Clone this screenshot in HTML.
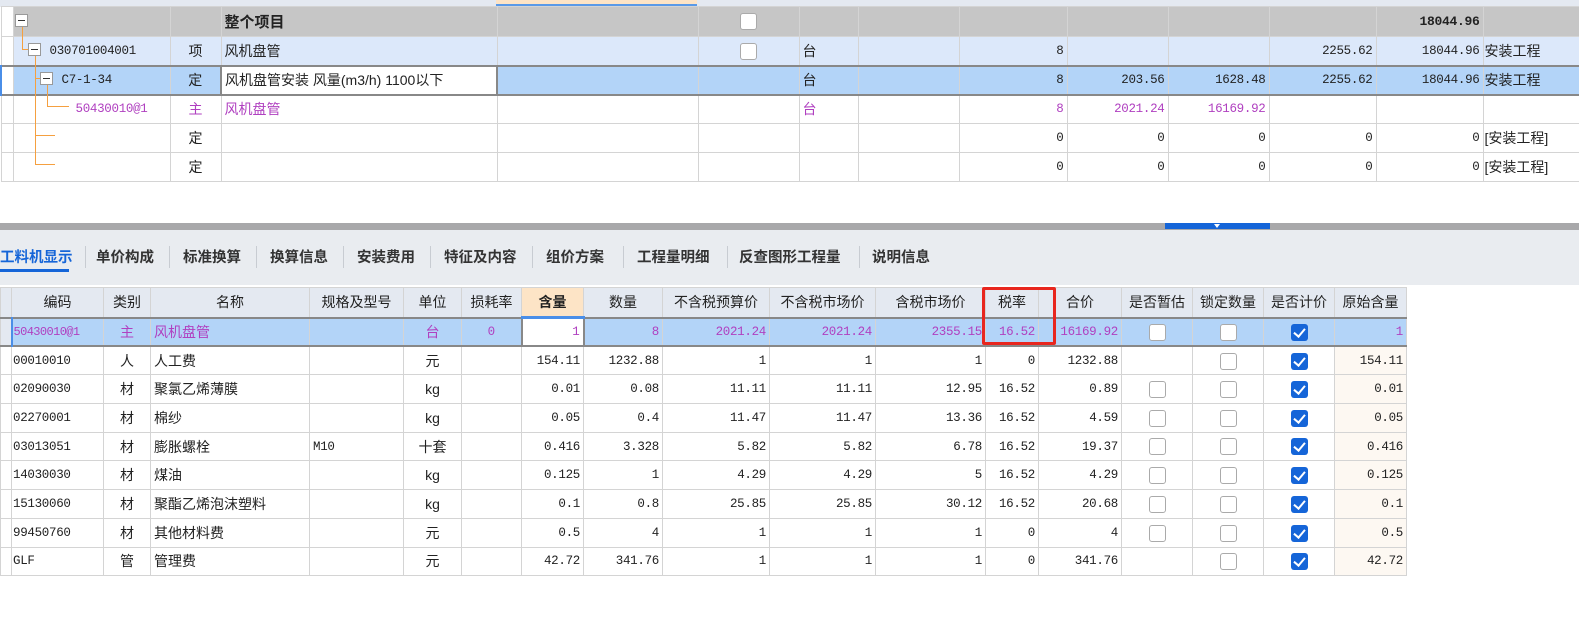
<!DOCTYPE html>
<html><head><meta charset="utf-8"><style>
*{margin:0;padding:0;box-sizing:border-box}
body{width:1579px;height:637px;background:#fff;position:relative;overflow:hidden;font-family:"Liberation Sans","Noto Sans CJK SC",sans-serif;font-size:14px;color:#222}
table{border-collapse:collapse;table-layout:fixed;position:absolute;left:0}
td{border:1px solid #d4d4d4;white-space:nowrap;overflow:hidden;padding:0 3px}
.n{text-align:right;font-family:"Liberation Mono","Noto Sans CJK SC",monospace;font-size:12.5px;letter-spacing:-0.3px}
.c{text-align:center}
.p{color:#b040c0}
.cb{display:inline-block;width:17px;height:17px;border:1.5px solid #aaa;border-radius:3px;background:#fff;vertical-align:middle}
.ck{display:inline-block;width:17px;height:17px;border-radius:3px;background:#1565d8;vertical-align:middle;position:relative}
.ck:after{content:"";position:absolute;left:5px;top:2px;width:5px;height:9px;border:solid #fff;border-width:0 2.5px 2.5px 0;transform:rotate(40deg)}
#top tr td{height:29px}
.tl{position:absolute;background:#f5a040}
.tb{position:absolute;width:13px;height:13px;border:1px solid #999;background:#fff}
.tb:after{content:"";position:absolute;left:2px;top:5px;width:7px;height:1px;background:#333}
.tab{position:absolute;top:246px;font-size:14.5px;font-weight:bold;color:#333}
.sep{position:absolute;top:246px;width:1px;height:22px;background:#c8ccd2}
#bot td{height:28.7px}
#bot .h td{background:#e4e9f1;text-align:center;font-size:14px;height:30px}
.cr{background:#fdf8f2}
</style></head><body>
<div style="position:absolute;left:0;top:0;width:1579px;height:7px;background:#e4e9f1"></div>
<div style="position:absolute;left:496px;top:4px;width:201px;height:3px;background:#5a9ae8"></div>
<div style="position:absolute;left:496px;top:0;width:201px;height:4px;background:#fde4c6"></div>
<table id="top" style="top:6px;width:1579px">
<colgroup><col style="width:12px"><col style="width:157px"><col style="width:51px"><col style="width:276px"><col style="width:201px"><col style="width:101px"><col style="width:59px"><col style="width:101px"><col style="width:108px"><col style="width:101px"><col style="width:101px"><col style="width:107px"><col style="width:107px"><col style="width:97px"></colgroup>
<tr style="background:#c6c6c6;height:30px"><td style="background:#fff"></td><td></td><td></td><td style="font-weight:bold;font-size:15px">整个项目</td><td></td><td class="c"><span class="cb"></span></td><td></td><td></td><td></td><td></td><td></td><td></td><td class="n" style="font-weight:bold;font-size:13px">18044.96</td><td></td></tr>
<tr style="background:#dce8fa"><td style="background:#fff"></td><td class="n" style="text-align:left;padding-left:36px">030701004001</td><td class="c">项</td><td>风机盘管</td><td></td><td class="c"><span class="cb"></span></td><td>台</td><td></td><td class="n">8</td><td></td><td></td><td class="n">2255.62</td><td class="n">18044.96</td><td style="padding:0 1px">安装工程</td></tr>
<tr style="background:#b3d4f8;border-top:2px solid #888;border-bottom:2px solid #888"><td style="background:#fff;border-left:2px solid #4a8ee8"></td><td class="n" style="text-align:left;padding-left:48px">C7-1-34</td><td class="c">定</td><td style="background:#fff;border:2px solid #888">风机盘管安装 风量(m3/h) 1100以下</td><td></td><td></td><td>台</td><td></td><td class="n">8</td><td class="n">203.56</td><td class="n">1628.48</td><td class="n">2255.62</td><td class="n">18044.96</td><td style="padding:0 1px">安装工程</td></tr>
<tr class="p"><td></td><td class="n p" style="text-align:left;padding-left:62px">50430010@1</td><td class="c">主</td><td>风机盘管</td><td></td><td></td><td>台</td><td></td><td class="n p">8</td><td class="n p">2021.24</td><td class="n p">16169.92</td><td></td><td></td><td></td></tr>
<tr><td></td><td></td><td class="c">定</td><td></td><td></td><td></td><td></td><td></td><td class="n">0</td><td class="n">0</td><td class="n">0</td><td class="n">0</td><td class="n">0</td><td style="padding:0 1px">[安装工程]</td></tr>
<tr><td></td><td></td><td class="c">定</td><td></td><td></td><td></td><td></td><td></td><td class="n">0</td><td class="n">0</td><td class="n">0</td><td class="n">0</td><td class="n">0</td><td style="padding:0 1px">[安装工程]</td></tr>
</table>
<div class="tl" style="left:22px;top:27px;width:1px;height:23px"></div>
<div class="tl" style="left:22px;top:49px;width:7px;height:1px"></div>
<div class="tl" style="left:35px;top:56px;width:1px;height:109px"></div>
<div class="tl" style="left:35px;top:78px;width:7px;height:1px"></div>
<div class="tl" style="left:35px;top:135px;width:20px;height:1px"></div>
<div class="tl" style="left:35px;top:164px;width:20px;height:1px"></div>
<div class="tl" style="left:47px;top:85px;width:1px;height:22px"></div>
<div class="tl" style="left:47px;top:106px;width:22px;height:1px"></div>
<div class="tb" style="left:15px;top:14px"></div>
<div class="tb" style="left:28px;top:43px"></div>
<div class="tb" style="left:40px;top:72px"></div>
<div style="position:absolute;left:0;top:223px;width:1579px;height:7px;background:#a8a8aa"></div>
<div style="position:absolute;left:1165px;top:223px;width:105px;height:6px;background:#1565d8"></div>
<div style="position:absolute;left:1214px;top:224px;width:0;height:0;border-left:3px solid transparent;border-right:3px solid transparent;border-top:4px solid #fff"></div>
<div style="position:absolute;left:0;top:230px;width:1579px;height:55px;background:#e9ecf0"></div>
<div class="tab" style="left:0;color:#1565d8">工料机显示</div>
<div style="position:absolute;left:0;top:269px;width:69px;height:3px;background:#1565d8"></div>
<div class="sep" style="left:85px"></div><div class="tab" style="left:96px">单价构成</div>
<div class="sep" style="left:169px"></div><div class="tab" style="left:183px">标准换算</div>
<div class="sep" style="left:256px"></div><div class="tab" style="left:270px">换算信息</div>
<div class="sep" style="left:343px"></div><div class="tab" style="left:357px">安装费用</div>
<div class="sep" style="left:430px"></div><div class="tab" style="left:444px">特征及内容</div>
<div class="sep" style="left:532px"></div><div class="tab" style="left:546px">组价方案</div>
<div class="sep" style="left:623px"></div><div class="tab" style="left:637px">工程量明细</div>
<div class="sep" style="left:727px"></div><div class="tab" style="left:739px">反查图形工程量</div>
<div class="sep" style="left:859px"></div><div class="tab" style="left:872px">说明信息</div>
<table id="bot" style="top:287px;width:1406px">
<colgroup><col style="width:11px"><col style="width:92px"><col style="width:47px"><col style="width:159px"><col style="width:94px"><col style="width:58px"><col style="width:60px"><col style="width:62px"><col style="width:79px"><col style="width:107px"><col style="width:106px"><col style="width:110px"><col style="width:53px"><col style="width:83px"><col style="width:71px"><col style="width:71px"><col style="width:71px"><col style="width:72px"></colgroup>
<tr class="h"><td></td><td>编码</td><td>类别</td><td>名称</td><td>规格及型号</td><td>单位</td><td>损耗率</td><td style="background:#fde4c6;font-weight:bold;border-bottom:3px solid #4a8ee8">含量</td><td>数量</td><td>不含税预算价</td><td>不含税市场价</td><td>含税市场价</td><td>税率</td><td>合价</td><td>是否暂估</td><td>锁定数量</td><td>是否计价</td><td>原始含量</td></tr>
<tr style="background:#b3d4f8;border-top:2px solid #888;border-bottom:2px solid #888" class="p"><td style="background:#e4e9f1"></td><td class="n p" style="text-align:left;padding:0 1px;border-left:2px solid #4a8ee8;font-size:12px;letter-spacing:-0.6px">50430010@1</td><td class="c">主</td><td>风机盘管</td><td></td><td class="c">台</td><td class="n p c">0</td><td class="n p" style="background:#fff;border:2px solid #888">1</td><td class="n p">8</td><td class="n p">2021.24</td><td class="n p">2021.24</td><td class="n p">2355.15</td><td class="n p">16.52</td><td class="n p">16169.92</td><td class="c"><span class="cb"></span></td><td class="c"><span class="cb"></span></td><td class="c"><span class="ck"></span></td><td class="n p">1</td></tr>
<tr><td></td><td class="n" style="text-align:left;padding:0 1px">00010010</td><td class="c">人</td><td>人工费</td><td></td><td class="c">元</td><td></td><td class="n">154.11</td><td class="n">1232.88</td><td class="n">1</td><td class="n">1</td><td class="n">1</td><td class="n">0</td><td class="n">1232.88</td><td></td><td class="c"><span class="cb"></span></td><td class="c"><span class="ck"></span></td><td class="n cr">154.11</td></tr>
<tr><td></td><td class="n" style="text-align:left;padding:0 1px">02090030</td><td class="c">材</td><td>聚氯乙烯薄膜</td><td></td><td class="c">kg</td><td></td><td class="n">0.01</td><td class="n">0.08</td><td class="n">11.11</td><td class="n">11.11</td><td class="n">12.95</td><td class="n">16.52</td><td class="n">0.89</td><td class="c"><span class="cb"></span></td><td class="c"><span class="cb"></span></td><td class="c"><span class="ck"></span></td><td class="n cr">0.01</td></tr>
<tr><td></td><td class="n" style="text-align:left;padding:0 1px">02270001</td><td class="c">材</td><td>棉纱</td><td></td><td class="c">kg</td><td></td><td class="n">0.05</td><td class="n">0.4</td><td class="n">11.47</td><td class="n">11.47</td><td class="n">13.36</td><td class="n">16.52</td><td class="n">4.59</td><td class="c"><span class="cb"></span></td><td class="c"><span class="cb"></span></td><td class="c"><span class="ck"></span></td><td class="n cr">0.05</td></tr>
<tr><td></td><td class="n" style="text-align:left;padding:0 1px">03013051</td><td class="c">材</td><td>膨胀螺栓</td><td class="n" style="text-align:left">M10</td><td class="c">十套</td><td></td><td class="n">0.416</td><td class="n">3.328</td><td class="n">5.82</td><td class="n">5.82</td><td class="n">6.78</td><td class="n">16.52</td><td class="n">19.37</td><td class="c"><span class="cb"></span></td><td class="c"><span class="cb"></span></td><td class="c"><span class="ck"></span></td><td class="n cr">0.416</td></tr>
<tr><td></td><td class="n" style="text-align:left;padding:0 1px">14030030</td><td class="c">材</td><td>煤油</td><td></td><td class="c">kg</td><td></td><td class="n">0.125</td><td class="n">1</td><td class="n">4.29</td><td class="n">4.29</td><td class="n">5</td><td class="n">16.52</td><td class="n">4.29</td><td class="c"><span class="cb"></span></td><td class="c"><span class="cb"></span></td><td class="c"><span class="ck"></span></td><td class="n cr">0.125</td></tr>
<tr><td></td><td class="n" style="text-align:left;padding:0 1px">15130060</td><td class="c">材</td><td>聚酯乙烯泡沫塑料</td><td></td><td class="c">kg</td><td></td><td class="n">0.1</td><td class="n">0.8</td><td class="n">25.85</td><td class="n">25.85</td><td class="n">30.12</td><td class="n">16.52</td><td class="n">20.68</td><td class="c"><span class="cb"></span></td><td class="c"><span class="cb"></span></td><td class="c"><span class="ck"></span></td><td class="n cr">0.1</td></tr>
<tr><td></td><td class="n" style="text-align:left;padding:0 1px">99450760</td><td class="c">材</td><td>其他材料费</td><td></td><td class="c">元</td><td></td><td class="n">0.5</td><td class="n">4</td><td class="n">1</td><td class="n">1</td><td class="n">1</td><td class="n">0</td><td class="n">4</td><td class="c"><span class="cb"></span></td><td class="c"><span class="cb"></span></td><td class="c"><span class="ck"></span></td><td class="n cr">0.5</td></tr>
<tr><td></td><td class="n" style="text-align:left;padding:0 1px">GLF</td><td class="c">管</td><td>管理费</td><td></td><td class="c">元</td><td></td><td class="n">42.72</td><td class="n">341.76</td><td class="n">1</td><td class="n">1</td><td class="n">1</td><td class="n">0</td><td class="n">341.76</td><td></td><td class="c"><span class="cb"></span></td><td class="c"><span class="ck"></span></td><td class="n cr">42.72</td></tr>
</table>
<div style="position:absolute;left:982px;top:287px;width:74px;height:58px;border:3px solid #e8261e;border-radius:2px"></div>
</body></html>
